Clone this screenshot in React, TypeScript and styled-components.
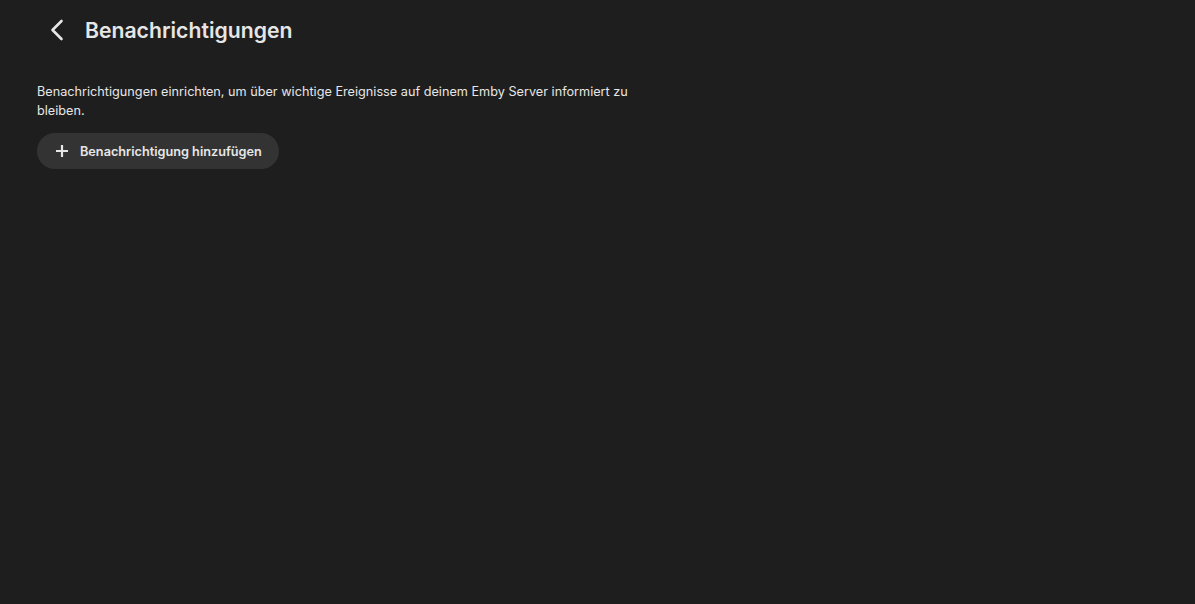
import styled, { createGlobalStyle } from 'styled-components';

const GlobalStyle = createGlobalStyle`
  html, body {
    margin: 0;
    padding: 0;
    background: #1e1e1e;
    color: #e6e6e6;
    font-family: Inter, 'Noto Sans', sans-serif;
  }
`;

const Page = styled.div`
  min-height: 604px;
  background: #1e1e1e;
  padding: 0 37px;
`;

const Header = styled.header`
  display: flex;
  align-items: center;
  height: 60px;
  padding-left: 8px;
`;

const BackButton = styled.button`
  display: flex;
  align-items: center;
  justify-content: center;
  width: 24px;
  height: 24px;
  padding: 0;
  margin-right: 16px;
  background: none;
  border: none;
  color: #e6e6e6;
  cursor: pointer;
`;

const Title = styled.h1`
  margin: 0;
  font-size: 21.2px;
  font-weight: 600;
  color: #e6e6e6;
`;

const Content = styled.section`
  padding-top: 22px;
`;

const Description = styled.p`
  margin: 0 0 13px;
  max-width: 610px;
  font-size: 12.7px;
  line-height: 19px;
  color: #e6e6e6;
`;

const AddButton = styled.button`
  display: inline-flex;
  align-items: center;
  gap: 10px;
  height: 36px;
  padding: 0 17px;
  border: none;
  border-radius: 18px;
  background: #333333;
  color: #e6e6e6;
  font-family: Inter, 'Noto Sans', sans-serif;
  font-size: 12.7px;
  font-weight: 600;
  cursor: pointer;
`;

export default function App() {
  return (
    <>
      <GlobalStyle />
      <Page>
        <Header>
          <BackButton aria-label='Zurück'>
            <svg width='24' height='24' viewBox='0 0 24 24' fill='none'>
              <path d='M16.5 3 L7.5 12 L16.5 21' stroke='#e6e6e6' strokeWidth='2.6' strokeLinecap='round' strokeLinejoin='round' />
            </svg>
          </BackButton>
          <Title>Benachrichtigungen</Title>
        </Header>
        <Content>
          <Description>
            Benachrichtigungen einrichten, um über wichtige Ereignisse auf deinem Emby Server informiert zu bleiben.
          </Description>
          <AddButton>
            <svg width='16' height='16' viewBox='0 0 16 16' fill='none'>
              <path d='M8 2 V14 M2 8 H14' stroke='#e6e6e6' strokeWidth='2.2' />
            </svg>
            Benachrichtigung hinzufügen
          </AddButton>
        </Content>
      </Page>
    </>
  );
}
